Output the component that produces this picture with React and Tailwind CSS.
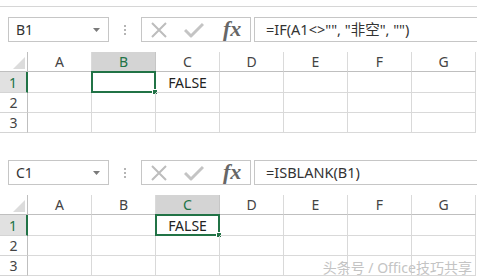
import React from 'react';

const COLS = ['A', 'B', 'C', 'D', 'E', 'F', 'G'];
const FONT = { fontFamily: '"Noto Sans", "Noto Sans CJK SC", sans-serif' };

function FormulaBar({ name, formula }) {
  return (
    <div className="flex items-stretch h-[25px]">
      <div className="ml-[8px] w-[101px] border border-[#c6c6c6] flex items-center justify-between pl-[7px] pr-[8px] text-[14px] text-[#333]">
        <span>{name}</span>
        <svg width="7" height="4" viewBox="0 0 7 4">
          <path d="M0 0h7L3.5 4z" fill="#7a7a7a" />
        </svg>
      </div>
      <div className="w-[32px] flex flex-col items-center justify-center gap-[2px]">
        <span className="w-[2px] h-[2px] bg-[#b5b5b5]" />
        <span className="w-[2px] h-[2px] bg-[#b5b5b5]" />
        <span className="w-[2px] h-[2px] bg-[#b5b5b5]" />
      </div>
      <div className="w-[110px] border border-[#c6c6c6] flex items-center pl-[8px]">
        <svg width="18" height="16" viewBox="0 0 18 16">
          <path d="M2 1l14 14M16 1L2 15" stroke="#bdbdbd" strokeWidth="2" fill="none" />
        </svg>
        <svg className="ml-[16px]" width="20" height="16" viewBox="0 0 20 16">
          <path d="M1 8l6 6L19 2" stroke="#c4c4c4" strokeWidth="3" fill="none" strokeLinejoin="round" />
        </svg>
        <span
          className="ml-[19px] text-[22px] italic font-bold text-[#666] leading-none -mt-[2px]"
          style={{ fontFamily: '"Liberation Serif", serif' }}
        >
          fx
        </span>
      </div>
      <div className="ml-[3px] flex-1 border border-r-0 border-[#c6c6c6] flex items-center pl-[11px] text-[14.5px] text-[#333]">
        {formula}
      </div>
    </div>
  );
}

function Sheet({ sel, value }) {
  return (
    <div className="grid grid-cols-[28px_repeat(7,64px)] grid-rows-[20px_21px_20px_20px] text-[14px] text-[#444]">
      <div className="relative border-r border-b border-[#bfbfbf]">
        <svg className="absolute right-[2px] bottom-[2px]" width="12" height="12" viewBox="0 0 12 12">
          <path d="M12 0v12H0z" fill="#dcdcdc" />
        </svg>
      </div>
      {COLS.map((c) => (
        <div
          key={c}
          className={`flex items-center justify-center border-b border-r ${
            c === sel
              ? 'bg-[#d4d4d4] text-[#217346] border-b-[#217346] border-r-[#c6c6c6]'
              : 'border-b-[#bfbfbf] border-r-[#dadada]'
          }`}
        >
          {c}
        </div>
      ))}
      {[1, 2, 3].map((r) => (
        <React.Fragment key={r}>
          <div
            className={`flex items-center justify-center border-b border-[#d4d4d4] ${
              r === 1
                ? 'bg-[#e1e1e1] text-[#217346] border-r-2 border-r-[#217346]'
                : 'border-r border-r-[#bfbfbf]'
            }`}
          >
            {r}
          </div>
          {COLS.map((c) => (
            <div
              key={c}
              className="relative flex items-center justify-center border-r border-b border-[#d9d9d9] text-[#222]"
            >
              {r === 1 && c === 'C' ? value : ''}
              {r === 1 && c === sel && (
                <div className="absolute -left-px -top-px -right-px -bottom-px border-2 border-[#217346]">
                  <span className="absolute -right-[4px] -bottom-[4px] w-[6px] h-[6px] bg-[#217346] border border-white" />
                </div>
              )}
            </div>
          ))}
        </React.Fragment>
      ))}
    </div>
  );
}

export default function App() {
  return (
    <div className="relative w-[477px] h-[279px] bg-white overflow-hidden" style={FONT}>
      <div className="h-[7px] border-b border-[#d6d6d6]" />
      <div className="mt-[10px]">
        <FormulaBar name="B1" formula={'=IF(A1<>"", "非空", "")'} />
      </div>
      <div className="mt-[10px]">
        <Sheet sel="B" value="FALSE" />
      </div>
      <div className="mt-[27px]">
        <FormulaBar name="C1" formula="=ISBLANK(B1)" />
      </div>
      <div className="mt-[10px]">
        <Sheet sel="C" value="FALSE" />
      </div>
      <div className="absolute right-[5px] bottom-[1px] text-[14px] text-[#c4c4c4]">
        头条号 / Office技巧共享
      </div>
    </div>
  );
}
